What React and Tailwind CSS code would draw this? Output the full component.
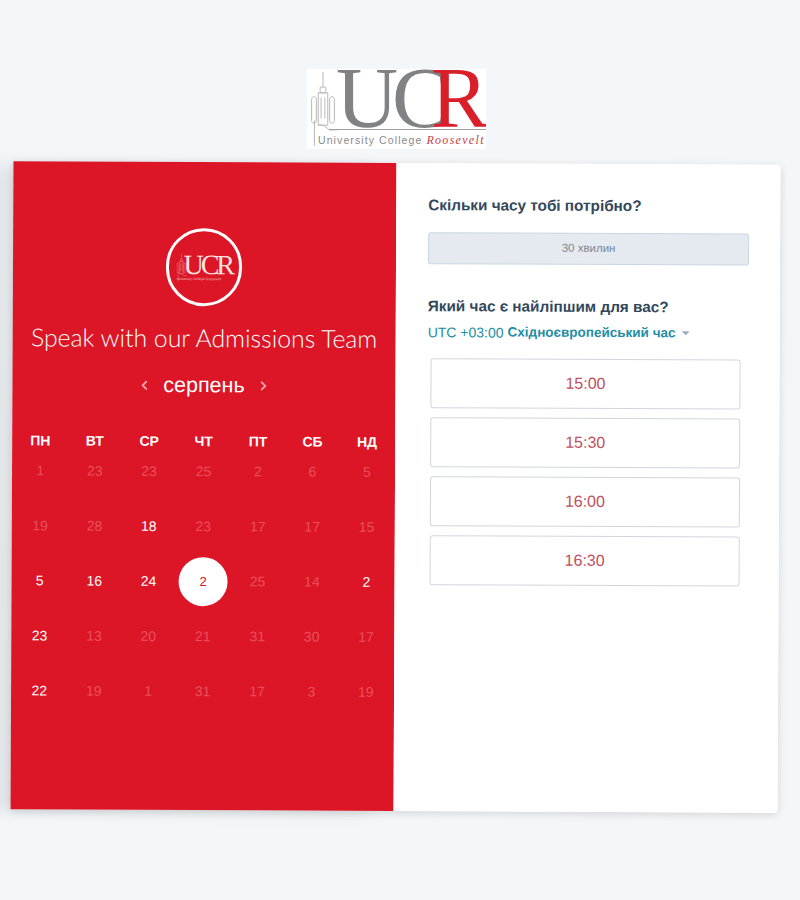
const DAYS = ['ПН', 'ВТ', 'СР', 'ЧТ', 'ПТ', 'СБ', 'НД'];

// [day, available, selected]
const WEEKS = [
  [[1], [23], [23], [25], [2], [6], [5]],
  [[19], [28], [18, true], [23], [17], [17], [15]],
  [[5, true], [16, true], [24, true], [2, true, true], [25], [14], [2, true]],
  [[23, true], [13], [20], [21], [31], [30], [17]],
  [[22, true], [19], [1], [31], [17], [3], [19]],
];

const SLOTS = ['15:00', '15:30', '16:00', '16:30'];

function Tower({ className, color }) {
  return (
    <svg viewBox="0 0 30 80" className={className} fill="none" stroke={color} strokeWidth="1">
      <path d="M15 1v16M12 17h6v6h-6zM10 23h10v34H10z" />
      <path d="M3 30c0-4 5-4 5 0v22c0 4-5 4-5 0zM22 30c0-4 5-4 5 0v22c0 4-5 4-5 0z" />
      <path d="M13 28v22M17 28v22M6 52v27M10 57h5l7 5h8" />
    </svg>
  );
}

function Logo() {
  return (
    <div className="relative ml-[-7px] w-[179px] h-[80px] bg-white overflow-hidden">
      <Tower className="absolute left-[1px] top-[2px] w-[30px] h-[76px]" color="#b4b4b4" />
      <div className="absolute left-[29px] top-0 font-['Liberation_Serif',serif] text-[86px] leading-[58px] tracking-[-6px] whitespace-nowrap text-[#808285]">UC</div>
      <div className="absolute left-[124px] top-0 font-['Liberation_Serif',serif] text-[86px] leading-[58px] w-[55px] text-[#d91f2a]">R</div>
      <div className="absolute left-[22px] right-0 top-[60px] h-px bg-[#a0a0a0]" />
      <div className="absolute left-[11px] top-[62px] flex items-baseline whitespace-nowrap">
        <span className="font-['Liberation_Sans',sans-serif] text-[10.5px] tracking-[1.1px] text-[#8a8a8a]">University College</span>
        <span className="ml-[4px] font-['Liberation_Serif',serif] italic text-[12px] tracking-[1.3px] text-[#c9404a]">Roosevelt</span>
      </div>
    </div>
  );
}

function Badge() {
  return (
    <div className="relative mr-[2px] w-[76px] h-[78px] rounded-full border-[3px] border-white">
      <Tower className="absolute left-[7px] top-[22px] w-[11px] h-[29px] opacity-60" color="#ffffff" />
      <div className="absolute left-[15px] top-[20px] font-['Liberation_Serif',serif] text-[28px] leading-[28px] tracking-[-3px] text-[#fbe3e4] whitespace-nowrap">UCR</div>
      <div className="absolute left-[8px] top-[46px] font-['Liberation_Sans',sans-serif] text-[3.5px] leading-[5px] text-[#f6b9bd] whitespace-nowrap">University College Roosevelt</div>
    </div>
  );
}

function Calendar() {
  return (
    <div className="w-full px-px">
      <div className="grid grid-cols-7 h-[20px] items-center text-center text-[14px] font-bold text-white">
        {DAYS.map(d => <div key={d}>{d}</div>)}
      </div>
      <div className="mt-[-7px] grid grid-cols-7 auto-rows-[55px] items-center text-center text-[14px]">
        {WEEKS.flat().map(([day, open, selected], i) => (
          <div key={i} className="flex justify-center">
            {selected ? (
              <span className="w-[49px] h-[49px] rounded-full bg-white text-[#dc1626] text-[13px] flex items-center justify-center">{day}</span>
            ) : (
              <span className={open ? 'text-white' : 'text-[#e9505e]'}>{day}</span>
            )}
          </div>
        ))}
      </div>
    </div>
  );
}

export default function App() {
  return (
    <div className="min-h-[900px] bg-[#f4f7fa] pt-[69px] flex flex-col items-center overflow-hidden font-['Liberation_Sans',sans-serif]">
      <Logo />

      <div className="mt-[14px] ml-[-10px] w-[767px] h-[648px] flex rotate-[0.26deg] bg-white rounded-[3px] shadow-[0_2px_8px_rgba(0,0,0,0.14)]">
        {/* Left panel */}
        <div className="w-[383px] bg-[#dc1626] flex flex-col items-center pt-[66px] shadow-[-24px_3px_16px_rgba(0,0,0,0.07)]">
          <Badge />
          <h1 className="mt-[16px] font-['Lato',sans-serif] font-light text-[24.8px] leading-[32px] text-white whitespace-nowrap">Speak with our Admissions Team</h1>
          <div className="mt-[15px] flex items-center h-[32px] text-white">
            <svg viewBox="0 0 8 12" className="w-[8px] h-[11px]" fill="none" stroke="#f3a0a7" strokeWidth="2"><path d="M6.5 1.5 2 6l4.5 4.5" /></svg>
            <span className="mx-[15px] text-[21.5px]">серпень</span>
            <svg viewBox="0 0 8 12" className="w-[8px] h-[11px]" fill="none" stroke="#f3a0a7" strokeWidth="2"><path d="M1.5 1.5 6 6l-4.5 4.5" /></svg>
          </div>
          <div className="mt-[30px] w-full">
            <Calendar />
          </div>
        </div>

        {/* Right panel */}
        <div className="relative flex-1 bg-white rounded-r-[3px] pl-[32px] pt-[32px]">
          <h2 className="text-[15.3px] leading-[20px] font-bold text-[#33475b]">Скільки часу тобі потрібно?</h2>
          <div className="mt-[17px] w-[321px] h-[32px] rounded-[3px] bg-[#e5e9f0] border border-[#cbd6e2] flex items-center justify-center text-[11.5px] text-[#7a8794]">30 хвилин</div>
          <h2 className="mt-[32px] text-[15.3px] leading-[20px] font-bold text-[#33475b]">Який час є найліпшим для вас?</h2>
          <div className="mt-[6px] flex items-center text-[14px] leading-[20px] text-[#1f8ea3]">
            <span>UTC +03:00</span>
            <span className="ml-[4px] font-bold text-[13.5px]">Східноєвропейський час</span>
            <span className="ml-[6px] w-0 h-0 border-x-[4px] border-x-transparent border-t-[4px] border-t-[#99acc2]" />
          </div>
          <div className="mt-[16px] ml-[3px] w-[310px] flex flex-col gap-[9px]">
            {SLOTS.map(t => (
              <div key={t} className="h-[50px] rounded-[3px] border border-[#d2d6dc] flex items-center justify-center text-[16px] text-[#c0505f]">{t}</div>
            ))}
          </div>
        </div>
      </div>
    </div>
  );
}
